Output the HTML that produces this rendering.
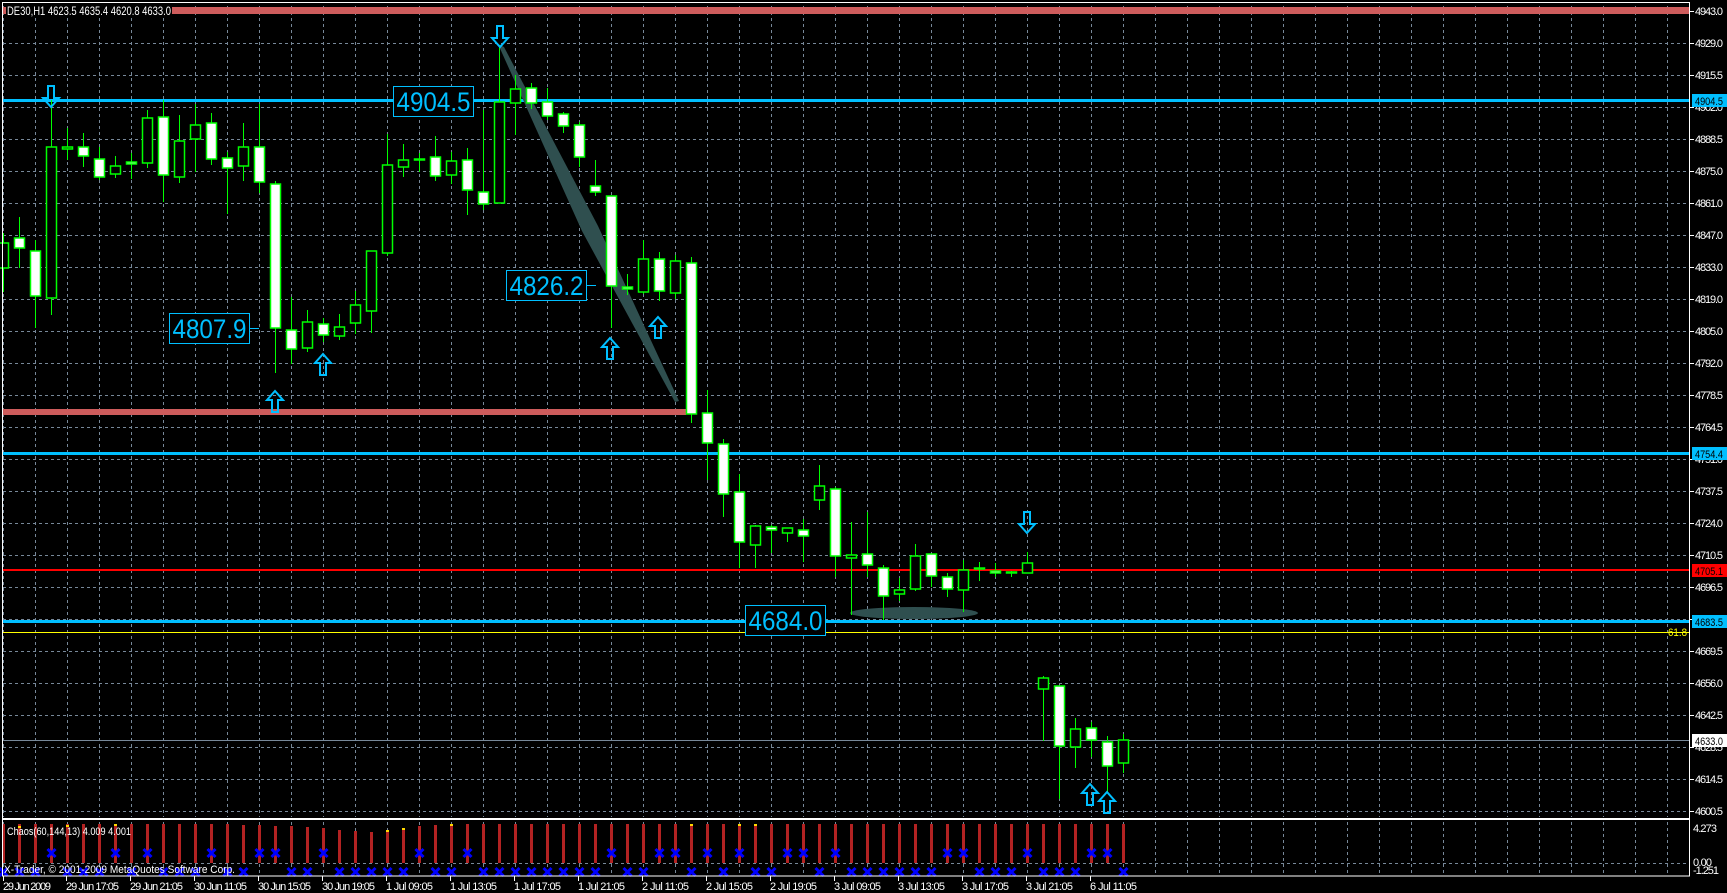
<!DOCTYPE html>
<html><head><meta charset="utf-8"><style>
html,body{margin:0;padding:0;background:#000;width:1727px;height:893px;overflow:hidden}
svg{display:block;font-family:"Liberation Sans",sans-serif}
</style></head><body>
<svg width="1727" height="893" viewBox="0 0 1727 893" xmlns="http://www.w3.org/2000/svg">
<defs>
<pattern id="vg" x="35" y="0" width="32" height="893" patternUnits="userSpaceOnUse"><line x1="0.5" y1="0" x2="0.5" y2="893" stroke="#778899" stroke-dasharray="3,3"/></pattern>
<path id="da" d="M6 0H12V12H17L9 21L1 12H6Z" fill="none" stroke="#00bfff" stroke-width="2"/>
<path id="ua" d="M6 21H12V9H17L9 0L1 9H6Z" fill="none" stroke="#00bfff" stroke-width="2"/>
<path id="bx" d="M-4 -4L4 4M4 -4L-4 4" stroke="#0000ff" stroke-width="3"/>
</defs>
<rect width="1727" height="893" fill="#000"/>
<rect x="3" y="3" width="1686" height="814" fill="url(#vg)"/>
<g stroke="#778899" stroke-dasharray="3,3">
<path d="M3 11.5H1689M3 43.5H1689M3 75.5H1689M3 107.5H1689M3 139.5H1689M3 171.5H1689M3 203.5H1689M3 235.5H1689M3 267.5H1689M3 299.5H1689M3 331.5H1689M3 363.5H1689M3 395.5H1689M3 427.5H1689M3 459.5H1689M3 491.5H1689M3 523.5H1689M3 555.5H1689M3 587.5H1689M3 619.5H1689M3 651.5H1689M3 683.5H1689M3 715.5H1689M3 747.5H1689M3 779.5H1689M3 811.5H1689"/>
<path d="M3 863.5H1689"/>
</g>
<rect x="3" y="821" width="1686" height="54" fill="url(#vg)"/>
<rect x="3" y="7" width="1686" height="7" fill="#cd5c5c"/>
<rect x="3" y="409" width="683" height="6" fill="#cd5c5c"/>
<rect x="3" y="99" width="1686" height="3" fill="#00bfff"/>
<rect x="3" y="452" width="1686" height="3" fill="#00bfff"/>
<rect x="3" y="569" width="1686" height="2" fill="#ff0000"/>
<rect x="3" y="620" width="1686" height="3" fill="#00bfff"/>
<rect x="3" y="632" width="1686" height="1" fill="#ffff00"/>
<rect x="3" y="740" width="1686" height="1" fill="#778899"/>
<text x="1687" y="636" fill="#ffff00" font-size="11" text-anchor="end" textLength="19" lengthAdjust="spacingAndGlyphs">61.8</text>
<polygon points="498,44 504,47 598,226 679,401 675,402 582,231" fill="#2f4f4f"/>
<ellipse cx="914" cy="613" rx="64" ry="6" fill="#2f4f4f"/>
<path stroke="#00ff00" stroke-width="1" fill="none" d="M3.5 233V292M19.5 217V268M35.5 240V328M51.5 100V315M67.5 128V160M83.5 133V167M99.5 147V180M115.5 156V178M131.5 153V179M147.5 110V168M163.5 100V202M179.5 115V183M195.5 104V172M211.5 113V165M227.5 152V214M243.5 123V181M259.5 104V193M275.5 181V373M291.5 297V364M307.5 310V352M323.5 318V342M339.5 314V340M355.5 291V334M371.5 251V333M387.5 134V256M403.5 144V177M419.5 153V172M435.5 136V181M451.5 152V184M467.5 148V215M483.5 110V210M499.5 45V203M515.5 75V135M531.5 83V109M547.5 88V120M563.5 112V133M579.5 122V167M595.5 160V196M611.5 196V328M627.5 274V295M643.5 240V294M659.5 252V301M675.5 255V299M691.5 257V423M707.5 390V480M723.5 439V517M739.5 474V568M755.5 525V568M771.5 525V553M787.5 528V542M803.5 519V562M819.5 465V510M835.5 487V577M851.5 522V615M867.5 512V577M883.5 565V620M899.5 578V601M915.5 544V591M931.5 554V587M947.5 573V597M963.5 560V612M979.5 562V581M995.5 563V577M1011.5 571V577M1027.5 552V573M1043.5 676V741M1059.5 686V799M1075.5 718V768M1091.5 722V757M1107.5 736V792M1123.5 734V773"/>
<g fill="#000" stroke="#00ff00" stroke-width="1.5">
<rect x="-1.5" y="243" width="10" height="25"/><rect x="46.5" y="147" width="10" height="151"/><rect x="62.5" y="147" width="10" height="2"/><rect x="110.5" y="166" width="10" height="8"/><rect x="142.5" y="118" width="10" height="45"/><rect x="174.5" y="141" width="10" height="36"/><rect x="190.5" y="125" width="10" height="14"/><rect x="238.5" y="147" width="10" height="19"/><rect x="302.5" y="322" width="10" height="26"/><rect x="334.5" y="327" width="10" height="9"/><rect x="350.5" y="305" width="10" height="18"/><rect x="366.5" y="251" width="10" height="60"/><rect x="382.5" y="165" width="10" height="88"/><rect x="398.5" y="160" width="10" height="7"/><rect x="414.5" y="159" width="10" height="1"/><rect x="446.5" y="161" width="10" height="14"/><rect x="494.5" y="102" width="10" height="101"/><rect x="510.5" y="89" width="10" height="14"/><rect x="638.5" y="259" width="10" height="33"/><rect x="670.5" y="261" width="10" height="32"/><rect x="750.5" y="526" width="10" height="19"/><rect x="782.5" y="528" width="10" height="5"/><rect x="814.5" y="486" width="10" height="14"/><rect x="846.5" y="555" width="10" height="3"/><rect x="894.5" y="590" width="10" height="4"/><rect x="910.5" y="556" width="10" height="33"/><rect x="958.5" y="570" width="10" height="20"/><rect x="974.5" y="568" width="10" height="1"/><rect x="1006.5" y="572" width="10" height="1"/><rect x="1022.5" y="563" width="10" height="10"/><rect x="1038.5" y="678" width="10" height="11"/><rect x="1070.5" y="729" width="10" height="18"/><rect x="1118.5" y="740" width="10" height="23"/>
</g>
<g fill="#fff" stroke="#00ff00" stroke-width="1.5">
<rect x="14.5" y="238" width="10" height="10"/><rect x="30.5" y="251" width="10" height="45"/><rect x="78.5" y="147" width="10" height="9"/><rect x="94.5" y="159" width="10" height="18"/><rect x="126.5" y="162" width="10" height="2"/><rect x="158.5" y="117" width="10" height="58"/><rect x="206.5" y="123" width="10" height="36"/><rect x="222.5" y="158" width="10" height="10"/><rect x="254.5" y="147" width="10" height="35"/><rect x="270.5" y="184" width="10" height="144"/><rect x="286.5" y="330" width="10" height="19"/><rect x="318.5" y="324" width="10" height="11"/><rect x="430.5" y="157" width="10" height="19"/><rect x="462.5" y="160" width="10" height="30"/><rect x="478.5" y="192" width="10" height="12"/><rect x="526.5" y="88" width="10" height="15"/><rect x="542.5" y="102" width="10" height="14"/><rect x="558.5" y="114" width="10" height="12"/><rect x="574.5" y="125" width="10" height="32"/><rect x="590.5" y="186" width="10" height="6"/><rect x="606.5" y="196" width="10" height="90"/><rect x="622.5" y="287" width="10" height="2"/><rect x="654.5" y="259" width="10" height="32"/><rect x="686.5" y="263" width="10" height="151"/><rect x="702.5" y="413" width="10" height="30"/><rect x="718.5" y="444" width="10" height="50"/><rect x="734.5" y="492" width="10" height="50"/><rect x="766.5" y="527" width="10" height="3"/><rect x="798.5" y="530" width="10" height="6"/><rect x="830.5" y="489" width="10" height="67"/><rect x="862.5" y="554" width="10" height="11"/><rect x="878.5" y="568" width="10" height="28"/><rect x="926.5" y="554" width="10" height="22"/><rect x="942.5" y="577" width="10" height="12"/><rect x="990.5" y="571" width="10" height="2"/><rect x="1054.5" y="686" width="10" height="60"/><rect x="1086.5" y="728" width="10" height="12"/><rect x="1102.5" y="742" width="10" height="24"/>
</g>
<use href="#da" x="42" y="86"/><use href="#da" x="491" y="26"/><use href="#da" x="1018" y="512"/>
<use href="#ua" x="266" y="391"/><use href="#ua" x="314" y="354"/><use href="#ua" x="601" y="338"/><use href="#ua" x="649" y="317"/><use href="#ua" x="1081" y="784"/><use href="#ua" x="1098" y="792"/>
<g fill="#000" stroke="#00bfff" stroke-width="1">
<rect x="393.5" y="86.5" width="80" height="30"/>
<rect x="169.5" y="313.5" width="80" height="30"/><path d="M249 328.5H259"/>
<rect x="506.5" y="270.5" width="80" height="30"/><path d="M586 285.5H596"/>
<rect x="745.5" y="605.5" width="80" height="30"/>
</g>
<g fill="#00bfff" font-size="27" text-anchor="middle">
<text x="433.5" y="111" textLength="74" lengthAdjust="spacingAndGlyphs">4904.5</text>
<text x="209.5" y="338" textLength="74" lengthAdjust="spacingAndGlyphs">4807.9</text>
<text x="546.5" y="295" textLength="74" lengthAdjust="spacingAndGlyphs">4826.2</text>
<text x="785.5" y="630" textLength="74" lengthAdjust="spacingAndGlyphs">4684.0</text>
</g>
<rect x="6" y="4" width="166" height="13" fill="#000"/>
<text x="7" y="15" fill="#fff" font-size="12" textLength="164" lengthAdjust="spacingAndGlyphs">DE30,H1  4623.5 4635.4 4620.8 4633.0</text>
<g stroke="#b22222" stroke-width="3">
<path d="M3.5 824V863M19.5 824V863M35.5 824V863M51.5 824V863M67.5 824V863M83.5 824V863M99.5 824V863M115.5 824V863M131.5 824V863M147.5 824V863M163.5 824V863M179.5 824V863M195.5 824V863M211.5 824V863M227.5 824V863M243.5 825V863M259.5 825V863M275.5 826V863M291.5 826V863M307.5 827V863M323.5 828V863M339.5 830V863M355.5 831V863M371.5 832V863M387.5 830V863M403.5 828V863M419.5 826V863M435.5 825V863M451.5 824V863M467.5 824V863M483.5 824V863M499.5 824V863M515.5 824V863M531.5 824V863M547.5 824V863M563.5 824V863M579.5 824V863M595.5 824V863M611.5 824V863M627.5 824V863M643.5 824V863M659.5 824V863M675.5 824V863M691.5 824V863M707.5 824V863M723.5 824V863M739.5 824V863M755.5 824V863M771.5 824V863M787.5 824V863M803.5 824V863M819.5 824V863M835.5 824V863M851.5 824V863M867.5 824V863M883.5 824V863M899.5 824V863M915.5 824V863M931.5 824V863M947.5 824V863M963.5 824V863M979.5 824V863M995.5 824V863M1011.5 824V863M1027.5 824V863M1043.5 824V863M1059.5 824V863M1075.5 824V863M1091.5 824V863M1107.5 824V863M1123.5 824V863"/>
</g>
<g fill="#ffd700">
<rect x="18" y="826" width="3" height="2"/><rect x="66" y="825" width="3" height="2"/><rect x="114" y="824" width="3" height="2"/><rect x="386" y="830" width="3" height="2"/><rect x="402" y="828" width="3" height="2"/><rect x="450" y="824" width="3" height="2"/><rect x="690" y="824" width="3" height="2"/><rect x="738" y="824" width="3" height="2"/><rect x="754" y="824" width="3" height="2"/>
</g>
<g>
<use href="#bx" x="51.5" y="853"/><use href="#bx" x="115.5" y="853"/><use href="#bx" x="147.5" y="853"/><use href="#bx" x="211.5" y="853"/><use href="#bx" x="259.5" y="853"/><use href="#bx" x="275.5" y="853"/><use href="#bx" x="323.5" y="853"/><use href="#bx" x="419.5" y="853"/><use href="#bx" x="467.5" y="853"/><use href="#bx" x="611.5" y="853"/><use href="#bx" x="659.5" y="853"/><use href="#bx" x="675.5" y="853"/><use href="#bx" x="707.5" y="853"/><use href="#bx" x="739.5" y="853"/><use href="#bx" x="787.5" y="853"/><use href="#bx" x="803.5" y="853"/><use href="#bx" x="835.5" y="853"/><use href="#bx" x="947.5" y="853"/><use href="#bx" x="963.5" y="853"/><use href="#bx" x="1027.5" y="853"/><use href="#bx" x="1091.5" y="853"/><use href="#bx" x="1107.5" y="853"/>
<use href="#bx" x="3.5" y="872"/><use href="#bx" x="19.5" y="872"/><use href="#bx" x="35.5" y="872"/><use href="#bx" x="67.5" y="872"/><use href="#bx" x="83.5" y="872"/><use href="#bx" x="99.5" y="872"/><use href="#bx" x="131.5" y="872"/><use href="#bx" x="163.5" y="872"/><use href="#bx" x="179.5" y="872"/><use href="#bx" x="195.5" y="872"/><use href="#bx" x="227.5" y="872"/><use href="#bx" x="243.5" y="872"/><use href="#bx" x="291.5" y="872"/><use href="#bx" x="307.5" y="872"/><use href="#bx" x="339.5" y="872"/><use href="#bx" x="355.5" y="872"/><use href="#bx" x="371.5" y="872"/><use href="#bx" x="387.5" y="872"/><use href="#bx" x="403.5" y="872"/><use href="#bx" x="435.5" y="872"/><use href="#bx" x="451.5" y="872"/><use href="#bx" x="483.5" y="872"/><use href="#bx" x="499.5" y="872"/><use href="#bx" x="515.5" y="872"/><use href="#bx" x="531.5" y="872"/><use href="#bx" x="547.5" y="872"/><use href="#bx" x="563.5" y="872"/><use href="#bx" x="579.5" y="872"/><use href="#bx" x="595.5" y="872"/><use href="#bx" x="627.5" y="872"/><use href="#bx" x="643.5" y="872"/><use href="#bx" x="691.5" y="872"/><use href="#bx" x="723.5" y="872"/><use href="#bx" x="755.5" y="872"/><use href="#bx" x="771.5" y="872"/><use href="#bx" x="819.5" y="872"/><use href="#bx" x="851.5" y="872"/><use href="#bx" x="867.5" y="872"/><use href="#bx" x="883.5" y="872"/><use href="#bx" x="899.5" y="872"/><use href="#bx" x="915.5" y="872"/><use href="#bx" x="931.5" y="872"/><use href="#bx" x="979.5" y="872"/><use href="#bx" x="995.5" y="872"/><use href="#bx" x="1011.5" y="872"/><use href="#bx" x="1043.5" y="872"/><use href="#bx" x="1059.5" y="872"/><use href="#bx" x="1075.5" y="872"/><use href="#bx" x="1123.5" y="872"/>
</g>
<text x="7" y="835" fill="#fff" font-size="11" textLength="124" lengthAdjust="spacingAndGlyphs">Chaos(60,144,13) 4.009 4.001</text>
<text x="4" y="873" fill="#fff" font-size="11" textLength="231" lengthAdjust="spacingAndGlyphs">X-Trader, © 2001-2009 MetaQuotes Software Corp.</text>
<g fill="none" stroke="#fff" stroke-width="1">
<rect x="2.5" y="2.5" width="1687" height="816"/>
<rect x="2.5" y="819.5" width="1687" height="56.5"/>
</g>
<g stroke="#fff"><path d="M1690 11.5h4M1690 43.5h4M1690 75.5h4M1690 107.5h4M1690 139.5h4M1690 171.5h4M1690 203.5h4M1690 235.5h4M1690 267.5h4M1690 299.5h4M1690 331.5h4M1690 363.5h4M1690 395.5h4M1690 427.5h4M1690 459.5h4M1690 491.5h4M1690 523.5h4M1690 555.5h4M1690 587.5h4M1690 619.5h4M1690 651.5h4M1690 683.5h4M1690 715.5h4M1690 747.5h4M1690 779.5h4M1690 811.5h4"/></g>
<g fill="#fff" font-size="11" lengthAdjust="spacingAndGlyphs">
<text x="1695" y="15" textLength="28">4943.0</text><text x="1695" y="47" textLength="28">4929.0</text><text x="1695" y="79" textLength="28">4915.5</text><text x="1695" y="111" textLength="28">4902.0</text><text x="1695" y="143" textLength="28">4888.5</text><text x="1695" y="175" textLength="28">4875.0</text><text x="1695" y="207" textLength="28">4861.0</text><text x="1695" y="239" textLength="28">4847.0</text><text x="1695" y="271" textLength="28">4833.0</text><text x="1695" y="303" textLength="28">4819.0</text><text x="1695" y="335" textLength="28">4805.0</text><text x="1695" y="367" textLength="28">4792.0</text><text x="1695" y="399" textLength="28">4778.5</text><text x="1695" y="431" textLength="28">4764.5</text><text x="1695" y="463" textLength="28">4751.0</text><text x="1695" y="495" textLength="28">4737.5</text><text x="1695" y="527" textLength="28">4724.0</text><text x="1695" y="559" textLength="28">4710.5</text><text x="1695" y="591" textLength="28">4696.5</text><text x="1695" y="655" textLength="28">4669.5</text><text x="1695" y="687" textLength="28">4656.0</text><text x="1695" y="719" textLength="28">4642.5</text><text x="1695" y="751" textLength="28">4628.5</text><text x="1695" y="783" textLength="28">4614.5</text><text x="1695" y="815" textLength="28">4600.5</text>
<text x="1693" y="832" textLength="24">4.273</text><text x="1693" y="866" textLength="19">0.00</text><text x="1693" y="874" textLength="26">-1.251</text>
</g>
<rect x="1692" y="94" width="35" height="13" fill="#00bfff"/><text x="1695" y="105" font-size="11" fill="#000" textLength="28" lengthAdjust="spacingAndGlyphs">4904.5</text>
<rect x="1692" y="447" width="35" height="13" fill="#00bfff"/><text x="1695" y="458" font-size="11" fill="#000" textLength="28" lengthAdjust="spacingAndGlyphs">4754.4</text>
<rect x="1692" y="564" width="35" height="13" fill="#ff0000"/><text x="1695" y="575" font-size="11" fill="#000" textLength="28" lengthAdjust="spacingAndGlyphs">4705.1</text>
<rect x="1692" y="615" width="35" height="13" fill="#00bfff"/><text x="1695" y="626" font-size="11" fill="#000" textLength="28" lengthAdjust="spacingAndGlyphs">4683.5</text>
<rect x="1692" y="734" width="35" height="13" fill="#fff"/><text x="1695" y="745" font-size="11" fill="#000" textLength="28" lengthAdjust="spacingAndGlyphs">4633.0</text>
<g stroke="#fff"><path d="M3.5 876v5M66.5 876v5M130.5 876v5M194.5 876v5M258.5 876v5M322.5 876v5M386.5 876v5M450.5 876v5M514.5 876v5M578.5 876v5M642.5 876v5M706.5 876v5M770.5 876v5M834.5 876v5M898.5 876v5M962.5 876v5M1026.5 876v5M1090.5 876v5"/></g>
<g fill="#fff" font-size="11" lengthAdjust="spacingAndGlyphs">
<text x="3" y="890" textLength="48">29 Jun 2009</text><text x="66" y="890" textLength="53">29 Jun 17:05</text><text x="130" y="890" textLength="53">29 Jun 21:05</text><text x="194" y="890" textLength="53">30 Jun 11:05</text><text x="258" y="890" textLength="53">30 Jun 15:05</text><text x="322" y="890" textLength="53">30 Jun 19:05</text><text x="386" y="890" textLength="47">1 Jul 09:05</text><text x="450" y="890" textLength="47">1 Jul 13:05</text><text x="514" y="890" textLength="47">1 Jul 17:05</text><text x="578" y="890" textLength="47">1 Jul 21:05</text><text x="642" y="890" textLength="47">2 Jul 11:05</text><text x="706" y="890" textLength="47">2 Jul 15:05</text><text x="770" y="890" textLength="47">2 Jul 19:05</text><text x="834" y="890" textLength="47">3 Jul 09:05</text><text x="898" y="890" textLength="47">3 Jul 13:05</text><text x="962" y="890" textLength="47">3 Jul 17:05</text><text x="1026" y="890" textLength="47">3 Jul 21:05</text><text x="1090" y="890" textLength="47">6 Jul 11:05</text>
</g>
</svg>
</body></html>
